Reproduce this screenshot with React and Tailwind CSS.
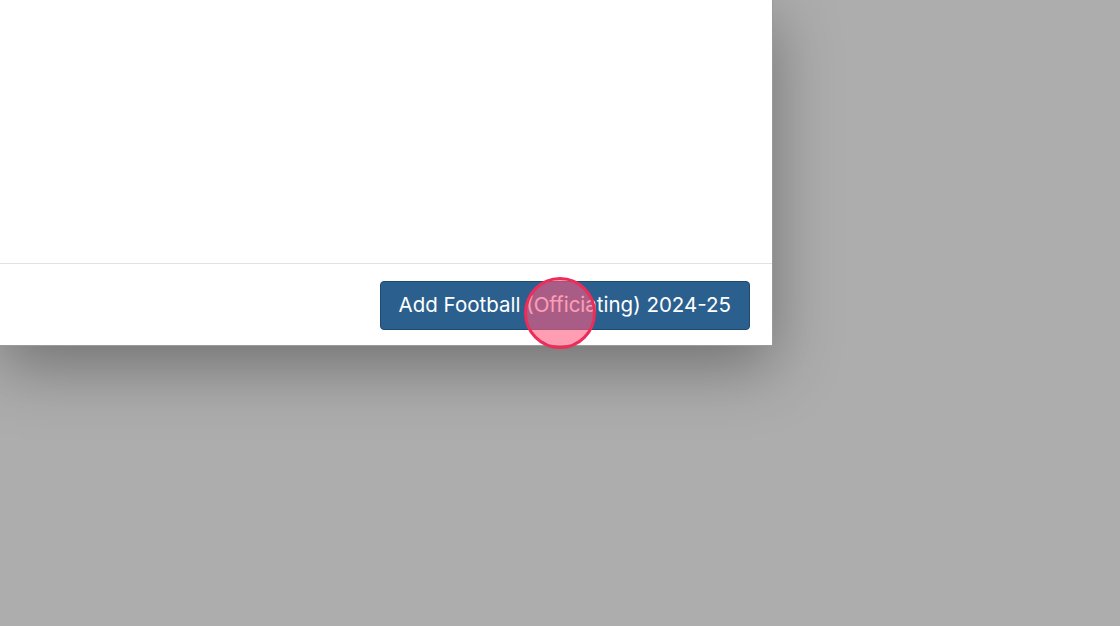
import React from 'react';

export default function App() {
  return (
    <div className="relative w-[1120px] h-[626px] overflow-hidden bg-[#adadad]" style={{ fontFamily: 'Inter, "Noto Sans", sans-serif' }}>
      {/* Modal */}
      <div className="w-[773px] h-[346px] bg-white flex flex-col border-r border-b border-[#9a9a9a] shadow-[0_20px_60px_rgba(0,0,0,0.35)]">
        <div className="flex-1" />
        <div className="h-[82px] border-t border-[#e2e2e2] flex items-center justify-end pr-[22px] pt-[1px]">
          <button className="h-[49px] px-[18px] rounded-[4px] bg-[#2a5f8e] border border-[#1f4a70] text-white text-[20.5px] leading-none">
            Add Football (Officiating) 2024-25
          </button>
        </div>
      </div>

      {/* Click marker */}
      <div className="absolute left-[524px] top-[277px] w-[72px] h-[72px] rounded-full border-[3px] border-[#ec2d5a] bg-[#ff5c80]/60" />
    </div>
  );
}
